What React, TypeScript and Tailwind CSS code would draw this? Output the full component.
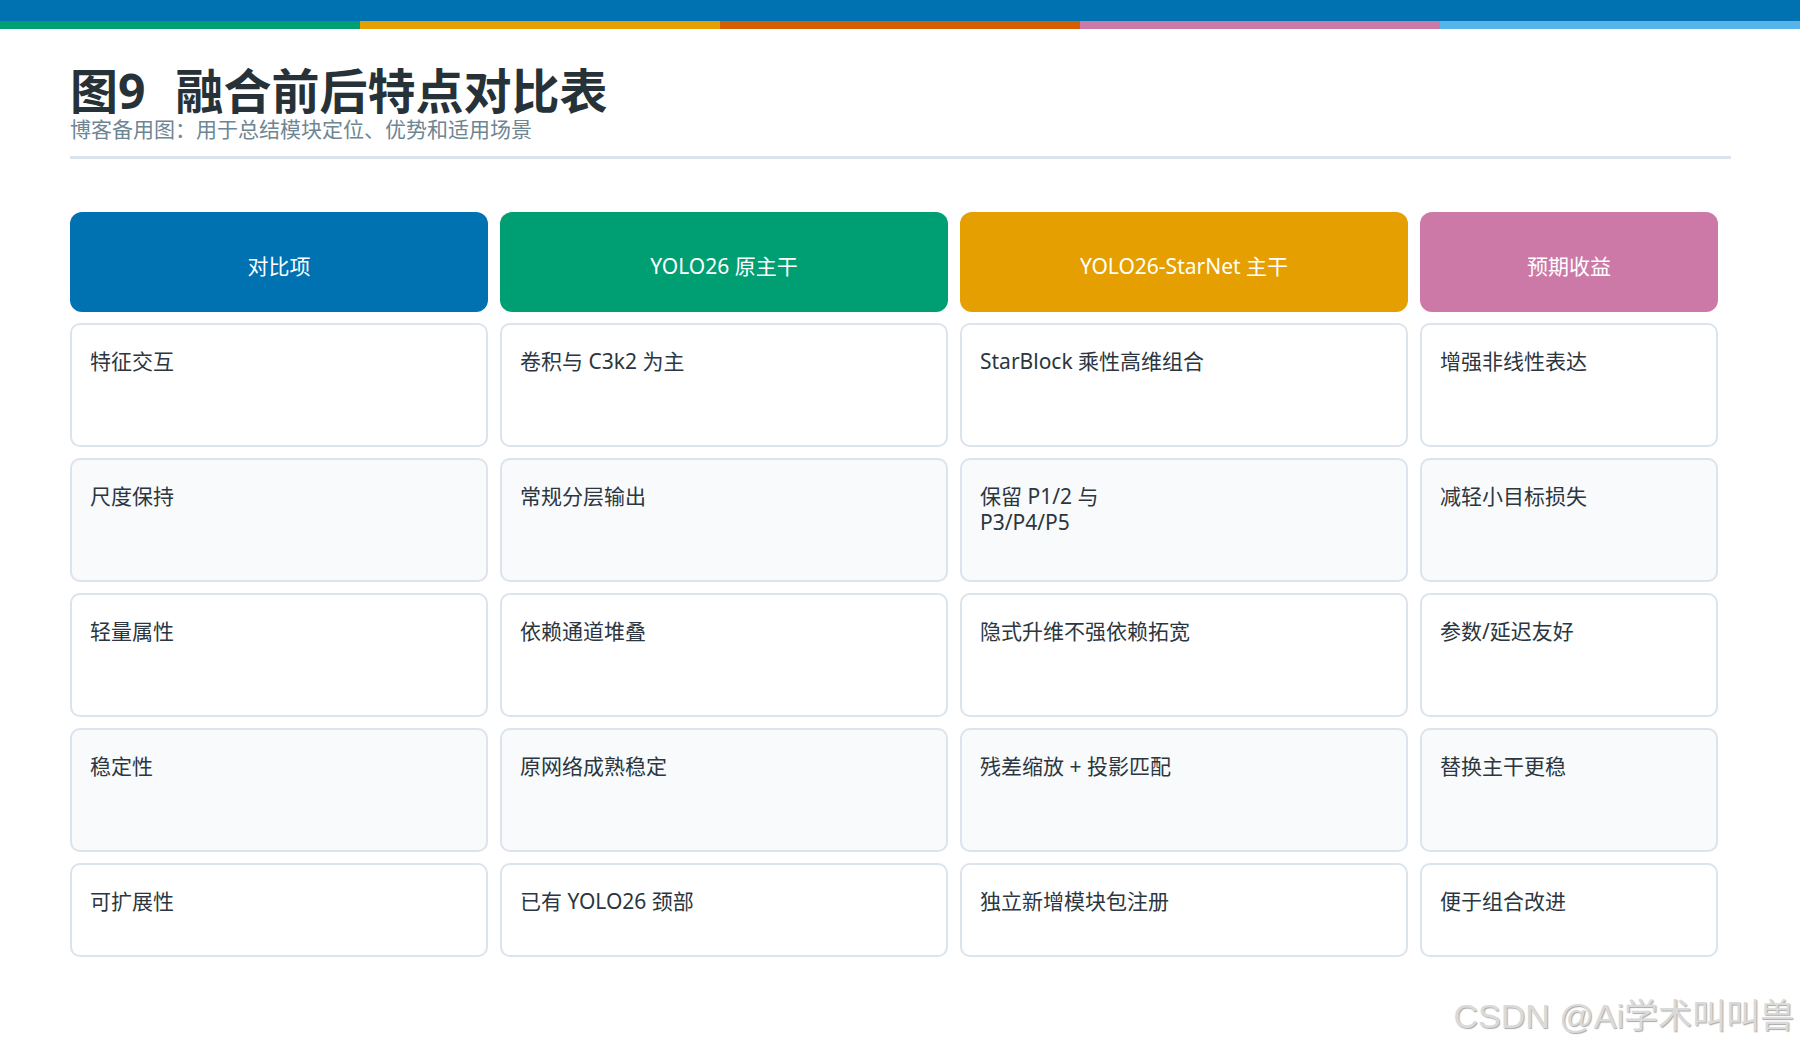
const font = { fontFamily: '"Noto Sans", "Noto Sans CJK SC", sans-serif' };

const heads = [
  { label: '对比项', cls: 'bg-[#0072B2]' },
  { label: 'YOLO26 原主干', cls: 'bg-[#009E73]' },
  { label: 'YOLO26-StarNet 主干', cls: 'bg-[#E69F00]' },
  { label: '预期收益', cls: 'bg-[#CC79A7]' },
];

const rows = [
  ['特征交互', '卷积与 C3k2 为主', 'StarBlock 乘性高维组合', '增强非线性表达'],
  ['尺度保持', '常规分层输出', '保留 P1/2 与\nP3/P4/P5', '减轻小目标损失'],
  ['轻量属性', '依赖通道堆叠', '隐式升维不强依赖拓宽', '参数/延迟友好'],
  ['稳定性', '原网络成熟稳定', '残差缩放 + 投影匹配', '替换主干更稳'],
  ['可扩展性', '已有 YOLO26 颈部', '独立新增模块包注册', '便于组合改进'],
];

export default function App() {
  return (
    <div className="w-[1800px] h-[1050px] bg-white relative overflow-hidden" style={font}>
      <div className="h-[21px] bg-[#0072B2]" />
      <div className="flex h-[8px]">
        <div className="flex-1 bg-[#009E73]" />
        <div className="flex-1 bg-[#E69F00]" />
        <div className="flex-1 bg-[#D55E00]" />
        <div className="flex-1 bg-[#CC79A7]" />
        <div className="flex-1 bg-[#56B4E9]" />
      </div>
      <div className="pl-[70px] pr-[69px]">
        <h1 className="mt-[34px] text-[48px] leading-[56px] font-bold text-[#263238] flex gap-[30px]">
          <span>图9</span>
          <span>融合前后特点对比表</span>
        </h1>
        <p className="text-[21px] leading-[24px] text-[#6e8593] -mt-[2px]">博客备用图：用于总结模块定位、优势和适用场景</p>
        <div className="mt-[15px] h-[3px] bg-[#dbe3ec]" />
        <div className="mt-[53px] grid grid-cols-[418px_448px_448px_298px] gap-x-[12px] gap-y-[11px]">
          {heads.map((h) => (
            <div key={h.label} className={`${h.cls} h-[100px] rounded-[12px] flex items-center justify-center pt-[10px] text-white text-[21px]`}>
              {h.label}
            </div>
          ))}
          {rows.map((r, i) =>
            r.map((c, j) => (
              <div
                key={`${i}-${j}`}
                className={`${i === 4 ? 'h-[94px]' : 'h-[124px]'} ${i % 2 === 1 ? 'bg-[#f8fafc]' : 'bg-white'} border-2 border-[#dbe3ec] rounded-[10px] px-[18px] pt-[23px] text-[21px] leading-[26px] text-[#2b3640] whitespace-pre-line`}
              >
                {c}
              </div>
            ))
          )}
        </div>
      </div>
      <div className="absolute right-[6px] bottom-[8px] text-[34px] text-[#dadada]" style={{ fontFamily: '"Liberation Sans", "Noto Sans CJK SC", sans-serif', textShadow: '1px 1px 1px #aaa' }}>
        CSDN @Ai学术叫叫兽
      </div>
    </div>
  );
}
